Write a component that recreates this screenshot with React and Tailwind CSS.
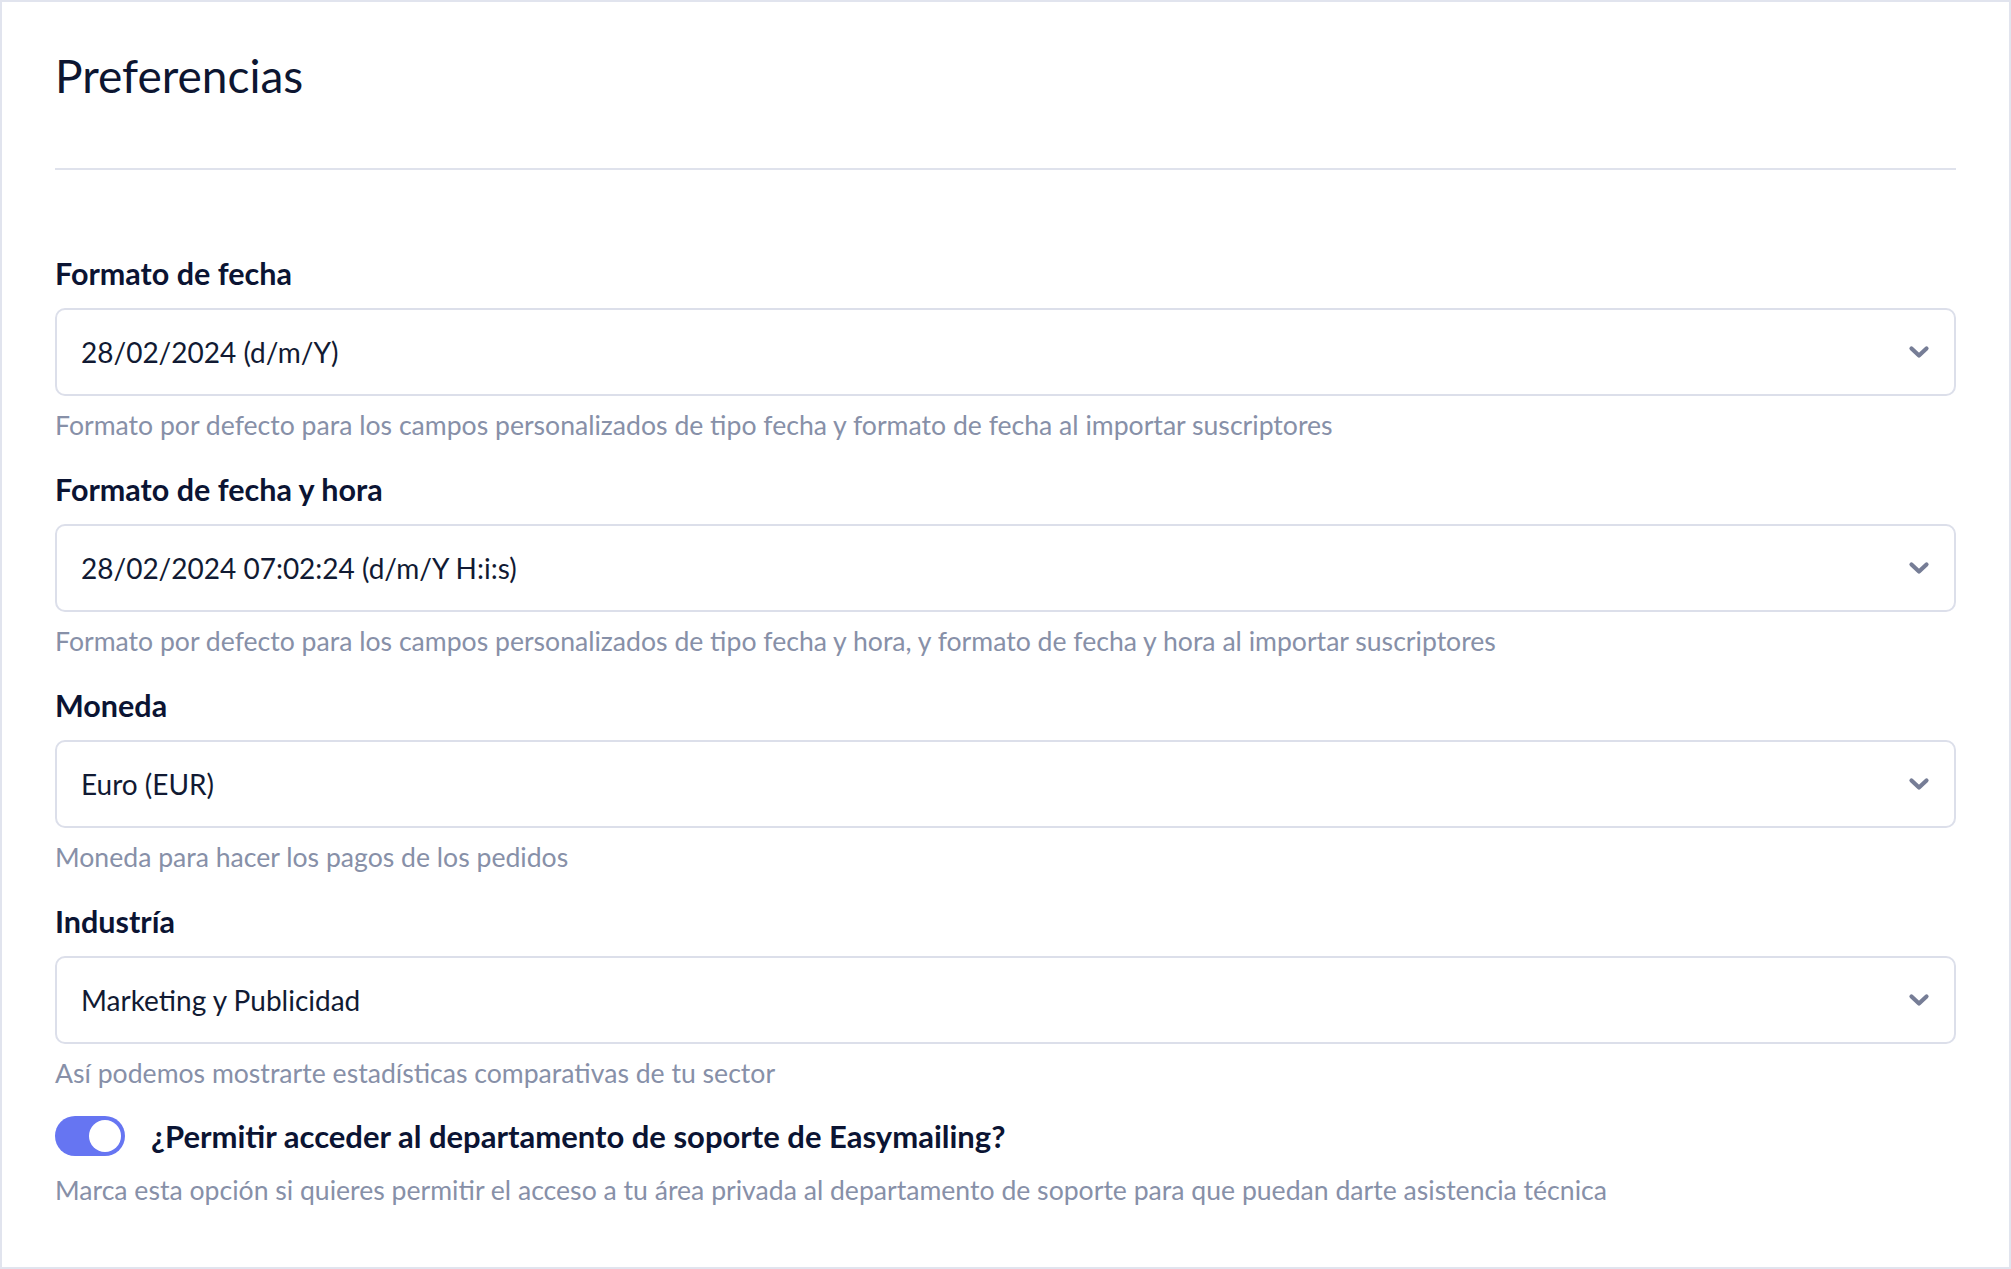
import React from 'react'

const fields = [
  {
    label: 'Formato de fecha',
    value: '28/02/2024 (d/m/Y)',
    help: 'Formato por defecto para los campos personalizados de tipo fecha y formato de fecha al importar suscriptores',
  },
  {
    label: 'Formato de fecha y hora',
    value: '28/02/2024 07:02:24 (d/m/Y H:i:s)',
    help: 'Formato por defecto para los campos personalizados de tipo fecha y hora, y formato de fecha y hora al importar suscriptores',
  },
  {
    label: 'Moneda',
    value: 'Euro (EUR)',
    help: 'Moneda para hacer los pagos de los pedidos',
  },
  {
    label: 'Industría',
    value: 'Marketing y Publicidad',
    help: 'Así podemos mostrarte estadísticas comparativas de tu sector',
  },
]

const Chevron = () => (
  <svg width="22" height="14" viewBox="0 0 22 14" fill="none">
    <path d="M3.5 3.5l7.5 7 7.5-7" stroke="#767d96" strokeWidth="4.2" strokeLinecap="round" strokeLinejoin="round" />
  </svg>
)

const SelectField = ({ label, value, help }) => {
  return (
    <div className="flex flex-col">
      <label className="text-[30.5px] leading-[34px] font-bold text-[#0b1433]">{label}</label>
      <div className="mt-[18px] h-[88px] w-full rounded-[10px] border-2 border-[#dcdfea] bg-white flex items-center justify-between pl-[24px] pr-[24px] cursor-pointer">
        <span className="text-[28px] text-[#111a33]">{value}</span>
        <Chevron />
      </div>
      <p className="mt-[12px] text-[26.6px] leading-[34px] text-[#8790a8]">{help}</p>
    </div>
  )
}

export default function App() {
  return (
    <div className="w-full h-[1269px] bg-white border-2 border-[#e1e4ee] px-[53px] pt-[46px] font-['Lato',sans-serif]">
      <h1 className="text-[46px] leading-[56px] font-normal text-[#0d1631]">Preferencias</h1>
      <div className="mt-[64px] h-[2px] w-full bg-[#dfe2ec]" />

      <div className="mt-[86px] flex flex-col gap-[30px]">
        {fields.map((f) => (
          <SelectField key={f.label} {...f} />
        ))}
      </div>

      <div className="mt-[23px] flex items-center gap-[26px]">
        <div className="w-[70px] h-[40px] rounded-full bg-[#6675f2] flex items-center justify-end pr-[4px] cursor-pointer">
          <span className="w-[32px] h-[32px] rounded-full bg-white" />
        </div>
        <span className="text-[31px] font-bold text-[#0b1433]">¿Permitir acceder al departamento de soporte de Easymailing?</span>
      </div>
      <p className="mt-[13px] text-[26.6px] leading-[34px] text-[#8790a8]">
        Marca esta opción si quieres permitir el acceso a tu área privada al departamento de soporte para que puedan darte asistencia técnica
      </p>
    </div>
  )
}
